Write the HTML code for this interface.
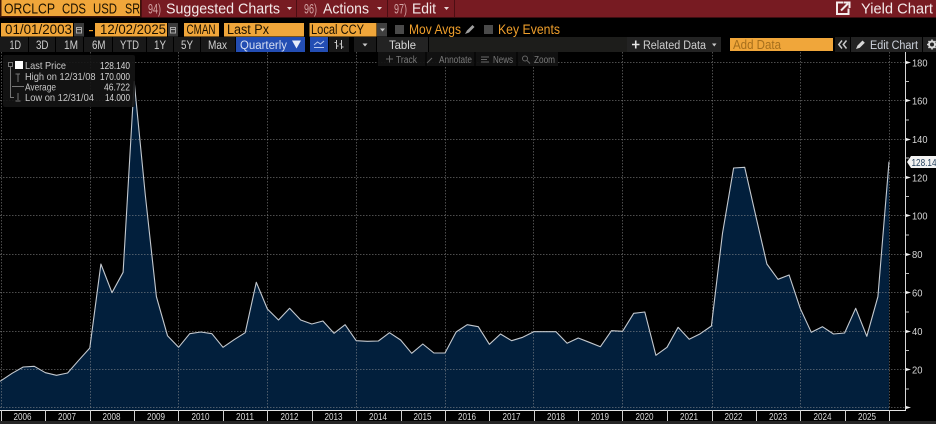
<!DOCTYPE html>
<html><head><meta charset="utf-8"><style>
html,body{margin:0;padding:0;background:#000;width:936px;height:424px;overflow:hidden}
svg{display:block}
text{font-family:"Liberation Sans",sans-serif;white-space:pre}
.y{fill:#d8d8d8;font-size:10.5px}
.yr{fill:#dcdcdc;font-size:10.5px;text-anchor:middle}
.lg{fill:#c8c8c8;font-size:10.5px}
.lv{fill:#d8d8d8;font-size:10.5px}
.btn{fill:#cfcfcf;font-size:11.5px}
.tool{fill:#7a7a7a;font-size:10px}
.or{fill:#ef9f2c;font-size:14px}
.ink{fill:#1c1200;font-size:13.5px}
.tab{fill:#f4eaea;font-size:15px}
.num{fill:#d4a6a6;font-size:14px}
</style></head><body>
<svg width="936" height="424" viewBox="0 0 936 424" xmlns="http://www.w3.org/2000/svg">
<rect width="936" height="424" fill="#000"/>

<!-- chart fill -->
<path fill="#021f3c" d="M0,381.3L1,380.7 12.1,373.3 23.2,367 34.3,366.3 45.4,372.7 56.5,375.3 67.6,373 78.7,360.3 89.8,348 100.9,264 112,292.7 123.1,272.3 134.2,81.6 145.3,195 156.4,296.7 167.5,335.7 178.6,347.3 189.7,333.7 200.8,332 211.9,333.7 223,347.3 234.1,339.7 245.2,332.7 256.3,282.3 267.4,309 278.5,320 289.6,308.3 300.7,320 311.8,324 322.9,321 334,333.3 345.1,324.7 356.2,340.7 367.3,341.3 378.4,341 389.5,332.7 400.6,340 411.7,353.3 422.8,344 433.9,353 445,353 456.1,332 467.2,324.7 478.3,326.7 489.4,344.3 500.5,334 511.6,340.7 522.7,337.3 533.8,331.7 544.9,331.7 556,331.7 567.1,343.3 578.2,338 589.3,342.3 600.4,346.7 611.5,330.7 622.6,331.3 633.7,313.3 644.8,312 655.9,355.3 667,347.3 678.1,327.3 689.2,339.3 700.3,333.7 711.4,326 722.5,233.3 733.6,168 744.7,167.3 755.8,216 766.9,264 778,279.3 789.1,275 800.2,308.3 811.3,332.3 822.4,326.7 833.5,334 844.6,333 855.7,308.3 866.8,336.3 877.9,296.7 889,161.7 889,410 0,410Z"/>

<!-- grid -->
<g stroke="#9a9a9a" stroke-opacity=".5" stroke-width="1" stroke-dasharray="1.5 1.5" fill="none">
<path d="M0,62.5H905M0,100.5H905M0,139.5H905M0,177.5H905M0,215.5H905M0,254.5H905M0,292.5H905M0,331.5H905M0,369.5H905M0,407.5H905"/>
<path d="M1.5,52V409M90.5,52V409M178.5,52V409M267.5,52V409M356.5,52V409M445.5,52V409M533.5,52V409M622.5,52V409M712.5,52V409M800.5,52V409M889.5,52V409"/>
</g>

<!-- chart line -->
<polyline fill="none" stroke="#c4c9cf" stroke-width="1.1" stroke-linejoin="round" points="0,381.3 1,380.7 12.1,373.3 23.2,367 34.3,366.3 45.4,372.7 56.5,375.3 67.6,373 78.7,360.3 89.8,348 100.9,264 112,292.7 123.1,272.3 134.2,81.6 145.3,195 156.4,296.7 167.5,335.7 178.6,347.3 189.7,333.7 200.8,332 211.9,333.7 223,347.3 234.1,339.7 245.2,332.7 256.3,282.3 267.4,309 278.5,320 289.6,308.3 300.7,320 311.8,324 322.9,321 334,333.3 345.1,324.7 356.2,340.7 367.3,341.3 378.4,341 389.5,332.7 400.6,340 411.7,353.3 422.8,344 433.9,353 445,353 456.1,332 467.2,324.7 478.3,326.7 489.4,344.3 500.5,334 511.6,340.7 522.7,337.3 533.8,331.7 544.9,331.7 556,331.7 567.1,343.3 578.2,338 589.3,342.3 600.4,346.7 611.5,330.7 622.6,331.3 633.7,313.3 644.8,312 655.9,355.3 667,347.3 678.1,327.3 689.2,339.3 700.3,333.7 711.4,326 722.5,233.3 733.6,168 744.7,167.3 755.8,216 766.9,264 778,279.3 789.1,275 800.2,308.3 811.3,332.3 822.4,326.7 833.5,334 844.6,333 855.7,308.3 866.8,336.3 877.9,296.7 889,161.7"/>

<!-- legend -->
<rect x="3" y="55" width="132" height="52" rx="2" fill="#141414" fill-opacity=".9"/>
<g stroke="#777" fill="none" stroke-width="1">
<rect x="8.5" y="62.5" width="4" height="4"/>
<path d="M10.5,67V97.5H14M15.5,74H20M18,74V82M12,86.5H24M18,93V100M15.5,101H20.5"/>
</g>
<rect x="15" y="61" width="8" height="8" fill="#fff"/>
<text class="lg" x="25" y="69" textLength="41" lengthAdjust="spacingAndGlyphs">Last Price</text>
<text class="lg" x="25" y="80" textLength="70.5" lengthAdjust="spacingAndGlyphs">High on 12/31/08</text>
<text class="lg" x="25" y="90.5" textLength="31" lengthAdjust="spacingAndGlyphs">Average</text>
<text class="lg" x="25" y="101" textLength="69" lengthAdjust="spacingAndGlyphs">Low on 12/31/04</text>
<text class="lv" x="100" y="69" textLength="30" lengthAdjust="spacingAndGlyphs">128.140</text>
<text class="lv" x="100" y="80" textLength="30" lengthAdjust="spacingAndGlyphs">170.000</text>
<text class="lv" x="104" y="90.5" textLength="26" lengthAdjust="spacingAndGlyphs">46.722</text>
<text class="lv" x="105" y="101" textLength="25" lengthAdjust="spacingAndGlyphs">14.000</text>

<!-- y axis -->
<path d="M905.5,52V410.5" stroke="#d8d8d8" stroke-width="1" fill="none"/>
<path d="M906,81.5H909M906,120H909M906,158H909M906,196.5H909M906,235H909M906,273.5H909M906,312H909M906,350.5H909M906,389H909" stroke="#bbb" stroke-width="1"/>
<g fill="#f0f0f0">
<path d="M906,61L911,62.5 906,64Z"/><path d="M906,99L911,100.5 906,102Z"/><path d="M906,138L911,139.5 906,141Z"/><path d="M906,176L911,177.5 906,179Z"/><path d="M906,214L911,215.5 906,217Z"/><path d="M906,253L911,254.5 906,256Z"/><path d="M906,291L911,292.5 906,294Z"/><path d="M906,330L911,331.5 906,333Z"/><path d="M906,368L911,369.5 906,371Z"/><path d="M906,406L911,407.5 906,409Z"/>
</g>
<text class="y" x="912" y="66.5" textLength="15.5" lengthAdjust="spacingAndGlyphs">180</text>
<text class="y" x="912" y="104.5" textLength="15.5" lengthAdjust="spacingAndGlyphs">160</text>
<text class="y" x="912" y="143" textLength="15.5" lengthAdjust="spacingAndGlyphs">140</text>
<text class="y" x="912" y="181.5" textLength="15.5" lengthAdjust="spacingAndGlyphs">120</text>
<text class="y" x="912" y="219.5" textLength="15.5" lengthAdjust="spacingAndGlyphs">100</text>
<text class="y" x="912" y="258" textLength="10.5" lengthAdjust="spacingAndGlyphs">80</text>
<text class="y" x="912" y="296.5" textLength="10.5" lengthAdjust="spacingAndGlyphs">60</text>
<text class="y" x="912" y="335" textLength="10.5" lengthAdjust="spacingAndGlyphs">40</text>
<text class="y" x="912" y="373.5" textLength="10.5" lengthAdjust="spacingAndGlyphs">20</text>

<!-- value tag -->
<path d="M907,162L911,156H936V168H911Z" fill="#f2f2f2"/>
<text x="911.5" y="166" font-size="10.5" fill="#24405c" textLength="25" lengthAdjust="spacingAndGlyphs">128.14</text>

<!-- x axis -->
<rect x="0" y="410" width="906" height="1" fill="#e4e4e4"/>
<rect x="0" y="421" width="936" height="3" fill="#262626"/>
<path d="M1.5,410V421M45.5,410V421M90.5,410V421M134.5,410V421M178.5,410V421M223.5,410V421M267.5,410V421M312.5,410V421M356.5,410V421M401.5,410V421M445.5,410V421M489.5,410V421M534.5,410V421M578.5,410V421M622.5,410V421M667.5,410V421M712.5,410V421M756.5,410V421M800.5,410V421M845.5,410V421M889.5,410V421" stroke="#cfcfcf" stroke-width="1"/>
<text class="yr" x="22.5" y="420" textLength="18" lengthAdjust="spacingAndGlyphs">2006</text><text class="yr" x="67" y="420" textLength="18" lengthAdjust="spacingAndGlyphs">2007</text><text class="yr" x="111.5" y="420" textLength="18" lengthAdjust="spacingAndGlyphs">2008</text><text class="yr" x="156" y="420" textLength="18" lengthAdjust="spacingAndGlyphs">2009</text><text class="yr" x="200.5" y="420" textLength="18" lengthAdjust="spacingAndGlyphs">2010</text><text class="yr" x="245" y="420" textLength="18" lengthAdjust="spacingAndGlyphs">2011</text><text class="yr" x="289.5" y="420" textLength="18" lengthAdjust="spacingAndGlyphs">2012</text><text class="yr" x="333.5" y="420" textLength="18" lengthAdjust="spacingAndGlyphs">2013</text><text class="yr" x="378" y="420" textLength="18" lengthAdjust="spacingAndGlyphs">2014</text><text class="yr" x="422.5" y="420" textLength="18" lengthAdjust="spacingAndGlyphs">2015</text><text class="yr" x="467" y="420" textLength="18" lengthAdjust="spacingAndGlyphs">2016</text><text class="yr" x="511.5" y="420" textLength="18" lengthAdjust="spacingAndGlyphs">2017</text><text class="yr" x="556" y="420" textLength="18" lengthAdjust="spacingAndGlyphs">2018</text><text class="yr" x="600" y="420" textLength="18" lengthAdjust="spacingAndGlyphs">2019</text><text class="yr" x="644.5" y="420" textLength="18" lengthAdjust="spacingAndGlyphs">2020</text><text class="yr" x="689" y="420" textLength="18" lengthAdjust="spacingAndGlyphs">2021</text><text class="yr" x="733.5" y="420" textLength="18" lengthAdjust="spacingAndGlyphs">2022</text><text class="yr" x="778" y="420" textLength="18" lengthAdjust="spacingAndGlyphs">2023</text><text class="yr" x="822.5" y="420" textLength="18" lengthAdjust="spacingAndGlyphs">2024</text><text class="yr" x="867" y="420" textLength="18" lengthAdjust="spacingAndGlyphs">2025</text>

<!-- overlay toolbar -->
<rect x="378" y="52" width="180" height="14" fill="#121212" fill-opacity=".92"/>
<path d="M426,52V66M475,52V66M517,52V66" stroke="#000" stroke-width="1"/>
<path d="M386,59H393M389.5,55.5V62.5" stroke="#666" stroke-width="1"/>
<path d="M427,63L432,58" stroke="#666" stroke-width="1"/>
<path d="M481,57H489M481,59.5H487M481,62H489" stroke="#666" stroke-width="1"/>
<circle cx="525" cy="58.5" r="2.5" fill="none" stroke="#666"/><path d="M527,60.5L530,63.5" stroke="#666"/>
<text class="tool" x="396" y="63" textLength="21" lengthAdjust="spacingAndGlyphs">Track</text>
<text class="tool" x="439" y="63" textLength="33" lengthAdjust="spacingAndGlyphs">Annotate</text>
<text class="tool" x="493" y="63" textLength="20" lengthAdjust="spacingAndGlyphs">News</text>
<text class="tool" x="534" y="63" textLength="21" lengthAdjust="spacingAndGlyphs">Zoom</text>

<!-- title bar -->
<rect x="0" y="0" width="936" height="17.5" fill="#771b22"/>
<rect x="0" y="0" width="141.5" height="17.5" fill="#3c1508"/>
<rect x="1.5" y="0" width="138.5" height="16" fill="#f0a63a"/>
<g class="ink" style="font-size:14.5px">
<text x="4" y="13.5" fill="#1c1200" textLength="51" lengthAdjust="spacingAndGlyphs" style="font-size:14.5px">ORCLCP</text>
<text x="62" y="13.5" fill="#1c1200" textLength="24" lengthAdjust="spacingAndGlyphs" style="font-size:14.5px">CDS</text>
<text x="93" y="13.5" fill="#1c1200" textLength="24" lengthAdjust="spacingAndGlyphs" style="font-size:14.5px">USD</text>
<text x="125" y="13.5" fill="#1c1200" textLength="15" lengthAdjust="spacingAndGlyphs" style="font-size:14.5px">SR</text>
</g>
<path d="M296.5,0V17M387.5,0V17M454.5,0V17M141.5,0V17" stroke="#4c0e13" stroke-width="1"/>
<text class="num" x="148" y="13.5" textLength="13" lengthAdjust="spacingAndGlyphs">94)</text>
<text class="tab" x="166" y="13.5" textLength="114" lengthAdjust="spacingAndGlyphs">Suggested Charts</text>
<path d="M287,7H292L289.5,10Z" fill="#e8d8d8"/>
<text class="num" x="304" y="13.5" textLength="13" lengthAdjust="spacingAndGlyphs">96)</text>
<text class="tab" x="323" y="13.5" textLength="46" lengthAdjust="spacingAndGlyphs">Actions</text>
<path d="M377,7H382L379.5,10Z" fill="#e8d8d8"/>
<text class="num" x="394" y="13.5" textLength="13" lengthAdjust="spacingAndGlyphs">97)</text>
<text class="tab" x="412" y="13.5" textLength="24" lengthAdjust="spacingAndGlyphs">Edit</text>
<path d="M444,7H449L446.5,10Z" fill="#e8d8d8"/>
<path d="M843.5,2.5H837V14H848.5V8.5" fill="none" stroke="#f4eaea" stroke-width="2"/>
<path d="M841,10.5L848,3.5M844,2.5H849.5V8" fill="none" stroke="#f4eaea" stroke-width="2"/>
<text class="tab" x="861" y="13.5" textLength="72" lengthAdjust="spacingAndGlyphs">Yield Chart</text>

<!-- row 2 -->
<rect x="1" y="23" width="72" height="13.5" fill="#f0a63a"/>
<text class="ink" x="5" y="34" textLength="67" lengthAdjust="spacingAndGlyphs">01/01/2003</text>
<rect x="74" y="23" width="10" height="13.5" fill="#3a3a3a"/>
<path d="M76.5,27.5H81.5V33H76.5ZM76.5,29.5H81.5" fill="none" stroke="#a8a8a8"/>
<rect x="89" y="30" width="4" height="1.2" fill="#ef9f2c"/>
<rect x="95" y="23" width="72" height="13.5" fill="#f0a63a"/>
<text class="ink" x="100" y="34" textLength="66" lengthAdjust="spacingAndGlyphs">12/02/2025</text>
<rect x="168" y="23" width="10" height="13.5" fill="#3a3a3a"/>
<path d="M170.5,27.5H175.5V33H170.5ZM170.5,29.5H175.5" fill="none" stroke="#a8a8a8"/>
<rect x="184" y="23" width="35" height="13.5" fill="#f0a63a"/>
<text class="ink" x="186.5" y="34" textLength="29" lengthAdjust="spacingAndGlyphs">CMAN</text>
<rect x="224" y="23" width="80" height="13.5" fill="#f0a63a"/>
<text class="ink" x="227" y="34" textLength="42" lengthAdjust="spacingAndGlyphs">Last Px</text>
<rect x="309.5" y="23" width="67" height="13.5" fill="#f0a63a"/>
<text class="ink" x="311" y="34" textLength="53" lengthAdjust="spacingAndGlyphs">Local CCY</text>
<rect x="377" y="23" width="10" height="13.5" fill="#3f3f3f"/>
<path d="M380,28.5H385L382.5,31.5Z" fill="#c8c8c8"/>
<rect x="395" y="25" width="9" height="9" fill="#4a4a4a"/>
<text class="or" x="409" y="34" textLength="52" lengthAdjust="spacingAndGlyphs">Mov Avgs</text>
<path d="M465,34L467,30.5 472.5,25 474.5,27 469,32.5Z" fill="#a0a0a0"/>
<rect x="484" y="25" width="9" height="9" fill="#4a4a4a"/>
<text class="or" x="498" y="34" textLength="62" lengthAdjust="spacingAndGlyphs">Key Events</text>

<!-- row 3 -->
<rect x="0" y="37" width="936" height="15" fill="#000"/>
<g fill="#191919">
<rect x="0" y="37" width="28" height="15"/><rect x="29" y="37" width="26" height="15"/><rect x="56" y="37" width="27" height="15"/><rect x="84" y="37" width="28" height="15"/><rect x="113" y="37" width="33" height="15"/><rect x="147" y="37" width="26" height="15"/><rect x="174" y="37" width="26" height="15"/><rect x="201" y="37" width="34" height="15"/>
<rect x="329" y="37" width="20" height="15"/><rect x="354" y="37" width="22" height="15"/>
<rect x="377" y="37" width="51" height="15" fill="#232323"/>
<rect x="429" y="37" width="198" height="15" fill="#1d1d1b"/>
<rect x="627" y="37" width="94" height="15" fill="#232323"/>
<rect x="851" y="37" width="71" height="15" fill="#232323"/>
<rect x="923" y="37" width="13" height="15" fill="#232323"/>
<rect x="835" y="37" width="15" height="15"/>
</g>
<text class="btn" x="9.5" y="49" textLength="11.5" lengthAdjust="spacingAndGlyphs">1D</text>
<text class="btn" x="36" y="49" textLength="12.5" lengthAdjust="spacingAndGlyphs">3D</text>
<text class="btn" x="64" y="49" textLength="14" lengthAdjust="spacingAndGlyphs">1M</text>
<text class="btn" x="92" y="49" textLength="13.5" lengthAdjust="spacingAndGlyphs">6M</text>
<text class="btn" x="120" y="49" textLength="19" lengthAdjust="spacingAndGlyphs">YTD</text>
<text class="btn" x="154" y="49" textLength="12" lengthAdjust="spacingAndGlyphs">1Y</text>
<text class="btn" x="181" y="49" textLength="12" lengthAdjust="spacingAndGlyphs">5Y</text>
<text class="btn" x="208" y="49" textLength="19" lengthAdjust="spacingAndGlyphs">Max</text>
<rect x="236" y="37" width="69" height="15" fill="#234db3"/>
<text x="240" y="49" font-size="11.5" fill="#d6def2" textLength="47" lengthAdjust="spacingAndGlyphs">Quarterly</text>
<path d="M292,40.5H301L296.500,48.5Z" fill="#e6ecfa"/>
<rect x="310" y="37" width="18" height="15" fill="#234db3"/>
<path d="M314,47.5H324M314,45L317.5,42 320.5,44 324,41" fill="none" stroke="#b8c8ee" stroke-width="1"/>
<path d="M336.5,40V49M341.5,40V49M334.5,42.5H336.5M336.5,46H338.5M339.5,44H341.5M341.5,47H343.5" fill="none" stroke="#c8c8c8" stroke-width="1"/>
<path d="M362.5,43.5H367.5L365,46.5Z" fill="#c8c8c8"/>
<text x="389" y="49" font-size="12" fill="#d8d8d8" textLength="27" lengthAdjust="spacingAndGlyphs">Table</text>
<path d="M632,44.5H639.5M635.75,40.5V48.5" stroke="#e6e6e6" stroke-width="1.6"/>
<text class="btn" x="643" y="49" textLength="63" lengthAdjust="spacingAndGlyphs">Related Data</text>
<path d="M712,43.5H716.5L714.25,46.5Z" fill="#c8c8c8"/>
<rect x="730" y="38" width="103" height="13" fill="#f0a63a"/>
<text x="733" y="49" font-size="12.5" fill="#a66f1c" textLength="48" lengthAdjust="spacingAndGlyphs">Add Data</text>
<path d="M842,40.5L838.8,44.5 842,48.5M846.5,40.5L843.3,44.5 846.5,48.5" fill="none" stroke="#c8c8c8" stroke-width="1.5"/>
<path d="M856,49L857.5,45.5 862.5,40.5 864.8,42.8 859.8,47.8Z" fill="#d8d8d8"/>
<text x="870" y="49" font-size="11.5" fill="#cfd4de" textLength="48" lengthAdjust="spacingAndGlyphs">Edit Chart</text>
<circle cx="932" cy="44.5" r="3" fill="none" stroke="#d8d8d8" stroke-width="2"/>
<path d="M932,39.5V41M932,48V49.5M927,44.5H928.5M935.5,44.5H937M928.5,41L929.5,42M934.5,47L935.5,48M935.5,41L934.5,42M929.5,47L928.5,48" stroke="#d8d8d8" stroke-width="1.5"/>
</svg>
</body></html>
